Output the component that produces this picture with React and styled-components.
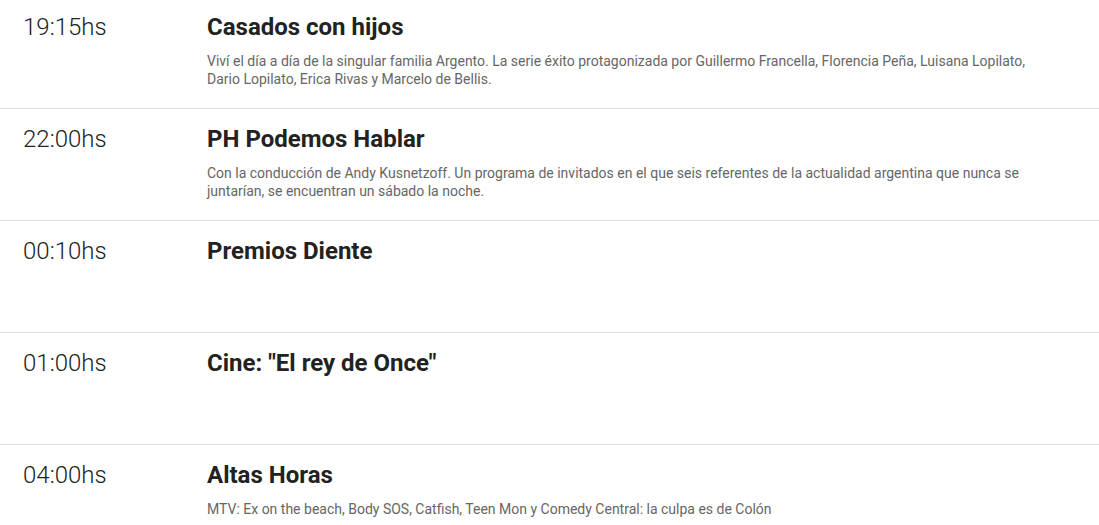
import React from "react";
import styled, { createGlobalStyle } from "styled-components";

const Global = createGlobalStyle`
  html, body { margin: 0; padding: 0; background: #fff; }
  body { font-family: Roboto, "Noto Sans", Arial, sans-serif; overflow: hidden; }
`;

const List = styled.ul`
  list-style: none;
  margin: -3px 0 0;
  padding: 0;
`;

const Row = styled.li`
  display: grid;
  grid-template-columns: 207px 1fr;
  box-sizing: border-box;
  min-height: 112px;
  padding: 16px 45px 16px 0;
  border-bottom: 1px solid #e0e0e0;
`;

const Time = styled.div`
  padding-left: 23px;
  font-size: 24px;
  line-height: 28px;
  font-weight: 300;
  color: #222;
`;

const Info = styled.div`
  display: flex;
  flex-direction: column;
`;

const Title = styled.h3`
  margin: 0;
  font-size: 24px;
  line-height: 28px;
  font-weight: 700;
  color: #222;
`;

const Description = styled.p`
  margin: 11px 0 0;
  font-size: 14px;
  line-height: 18px;
  color: #666;
`;

const programs = [
  {
    time: "19:15hs",
    title: "Casados con hijos",
    desc: "Viví el día a día de la singular familia Argento. La serie éxito protagonizada por Guillermo Francella, Florencia Peña, Luisana Lopilato, Dario Lopilato, Erica Rivas y Marcelo de Bellis.",
  },
  {
    time: "22:00hs",
    title: "PH Podemos Hablar",
    desc: "Con la conducción de Andy Kusnetzoff. Un programa de invitados en el que seis referentes de la actualidad argentina que nunca se juntarían, se encuentran un sábado la noche.",
  },
  { time: "00:10hs", title: "Premios Diente" },
  { time: "01:00hs", title: 'Cine: "El rey de Once"' },
  {
    time: "04:00hs",
    title: "Altas Horas",
    desc: "MTV: Ex on the beach, Body SOS, Catfish, Teen Mon y Comedy Central: la culpa es de Colón",
  },
];

export default function App() {
  return (
    <>
      <Global />
      <List>
        {programs.map((p) => (
          <Row key={p.time}>
            <Time>{p.time}</Time>
            <Info>
              <Title>{p.title}</Title>
              {p.desc && <Description>{p.desc}</Description>}
            </Info>
          </Row>
        ))}
      </List>
    </>
  );
}
